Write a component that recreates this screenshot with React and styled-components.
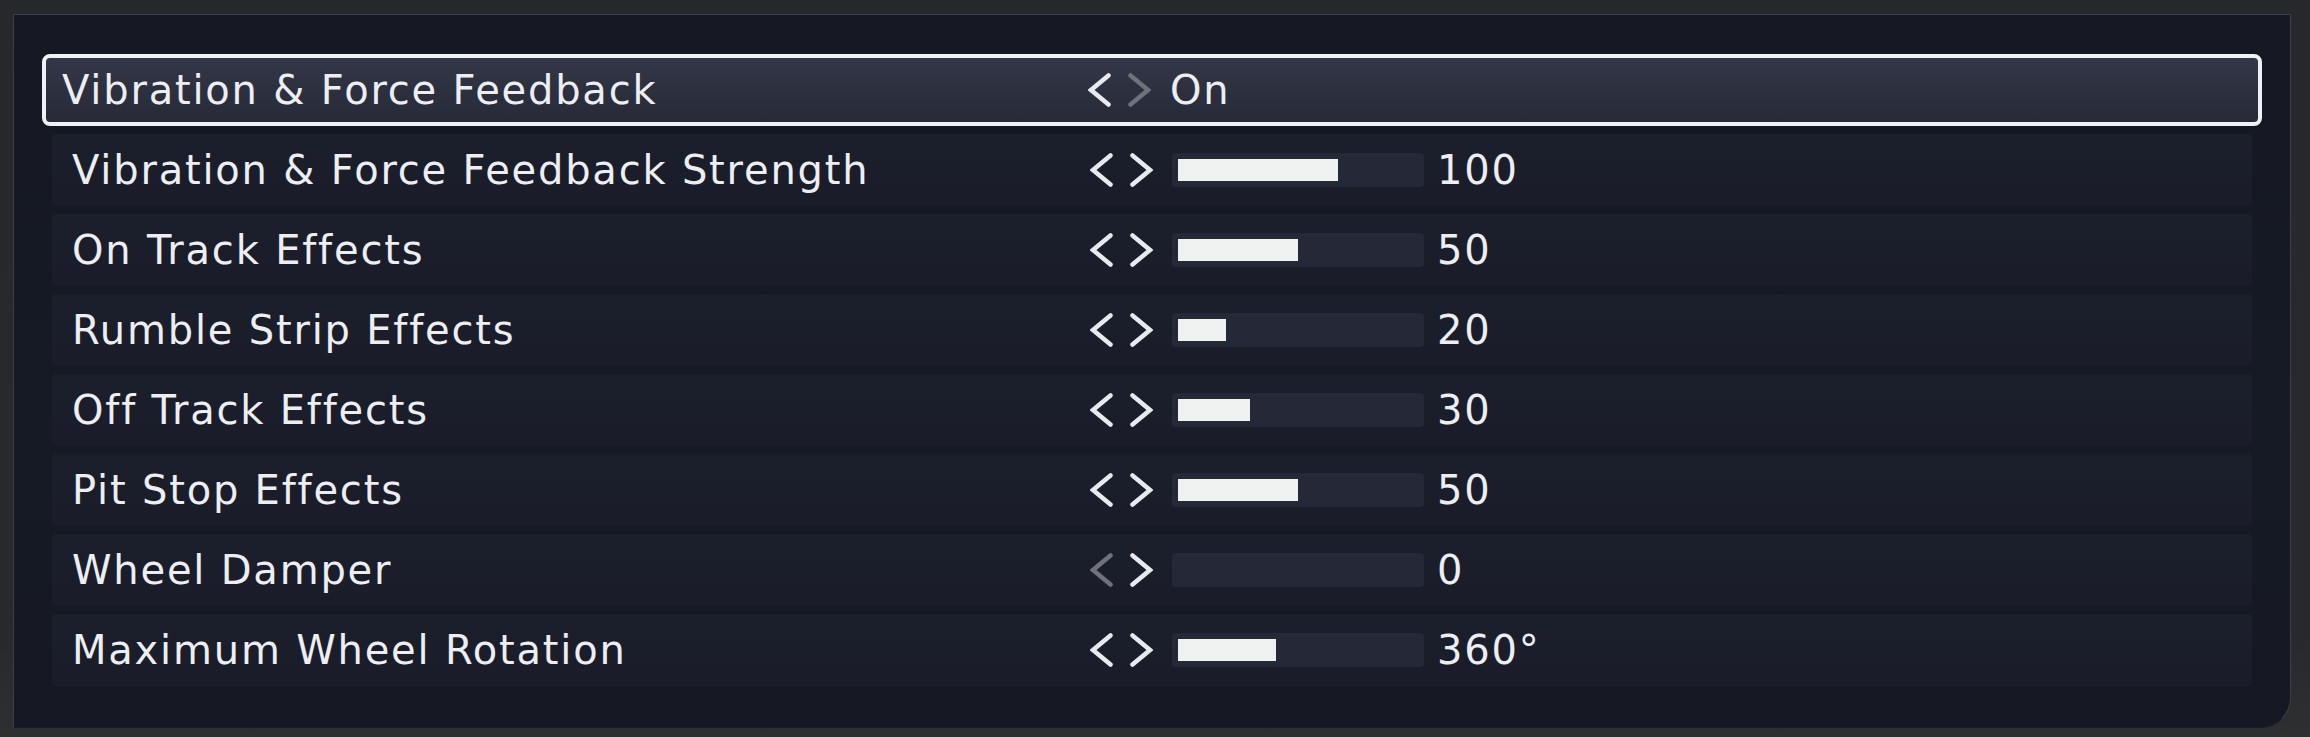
import React from "react";
import styled, { createGlobalStyle } from "styled-components";

const GlobalStyle = createGlobalStyle`
  html, body {
    margin: 0;
    padding: 0;
    background: #26282c;
  }
  body {
    font-family: "DejaVu Sans", "Liberation Sans", sans-serif;
  }
`;

const Page = styled.div`
  width: 2310px;
  height: 737px;
  box-sizing: border-box;
  padding: 14px 19px 9px 13px;
  background: linear-gradient(180deg, #26282c 0%, #28292d 85%, #2e2f31 100%);
`;

const Panel = styled.div`
  box-sizing: border-box;
  height: 714px;
  padding: 39px 38px 41px;
  display: flex;
  flex-direction: column;
  gap: 8px;
  background: linear-gradient(180deg, #151823 0%, #161a25 60%, #151822 100%);
  border: 1px solid #3b3e4b;
  border-bottom-color: #1b1e28;
  border-radius: 0 0 30px 0;
`;

const Row = styled.div`
  box-sizing: border-box;
  height: 72px;
  display: flex;
  align-items: center;
  margin: ${(p) => (p.$selected ? "0 -10px" : "0")};
  padding-left: ${(p) => (p.$selected ? "16px" : "20px")};
  border-radius: ${(p) => (p.$selected ? "8px" : "4px")};
  border: ${(p) => (p.$selected ? "4px solid #f0f1f4" : "none")};
  background: ${(p) =>
    p.$selected
      ? "linear-gradient(180deg, #343747 0%, #2c2f3e 55%, #272a37 100%)"
      : "linear-gradient(180deg, #1b1e2b 0%, #1a1d29 100%)"};
`;

const Label = styled.div`
  width: ${(p) => (p.$selected ? "1026px" : "1018px")};
  flex: none;
  color: #eceef2;
  font-size: 40px;
  letter-spacing: 1.8px;
  line-height: 1;
  white-space: nowrap;
`;

const Controls = styled.div`
  display: flex;
  align-items: center;
`;

const Arrows = styled.div`
  display: flex;
  align-items: center;
  gap: 17px;
  margin-right: 19px;
`;

const Track = styled.div`
  box-sizing: border-box;
  width: 252px;
  height: 34px;
  padding: 6px;
  border-radius: 4px;
  background: #252836;
  display: flex;
  align-items: center;
`;

const Fill = styled.div`
  height: 22px;
  background: #eff1f1;
`;

const Value = styled.span`
  color: #eceef2;
  font-size: 40px;
  letter-spacing: 1.8px;
  line-height: 1;
  margin-left: ${(p) => (p.$afterBar ? "13px" : "0")};
`;

const Chevron = ({ dir, enabled }) => (
  <svg width="23" height="34" viewBox="0 0 23 34">
    <path
      d={dir === "left" ? "M20.5 2.5 L3 17 L20.5 31.5" : "M2.5 2.5 L20 17 L2.5 31.5"}
      fill="none"
      stroke={enabled ? "#e9eaef" : "#6f727c"}
      strokeWidth="4.5"
      strokeLinecap="round"
      strokeLinejoin="miter"
    />
  </svg>
);

const rows = [
  { label: "Vibration & Force Feedback", text: "On", selected: true, next: false },
  { label: "Vibration & Force Feedback Strength", value: 100, max: 150 },
  { label: "On Track Effects", value: 50 },
  { label: "Rumble Strip Effects", value: 20 },
  { label: "Off Track Effects", value: 30 },
  { label: "Pit Stop Effects", value: 50 },
  { label: "Wheel Damper", value: 0, prev: false },
  { label: "Maximum Wheel Rotation", value: 360, max: 880, unit: "°" },
];

const SettingRow = ({ row }) => {
  const max = row.max || 100;
  return (
    <Row $selected={row.selected}>
      <Label $selected={row.selected}>{row.label}</Label>
      <Controls>
        <Arrows>
          <Chevron dir="left" enabled={row.prev !== false} />
          <Chevron dir="right" enabled={row.next !== false} />
        </Arrows>
        {row.text ? (
          <Value>{row.text}</Value>
        ) : (
          <>
            <Track>
              <Fill style={{ width: `${(row.value / max) * 240}px` }} />
            </Track>
            <Value $afterBar>
              {row.value}
              {row.unit || ""}
            </Value>
          </>
        )}
      </Controls>
    </Row>
  );
};

export default function App() {
  return (
    <>
      <GlobalStyle />
      <Page>
        <Panel>
          {rows.map((row) => (
            <SettingRow key={row.label} row={row} />
          ))}
        </Panel>
      </Page>
    </>
  );
}
